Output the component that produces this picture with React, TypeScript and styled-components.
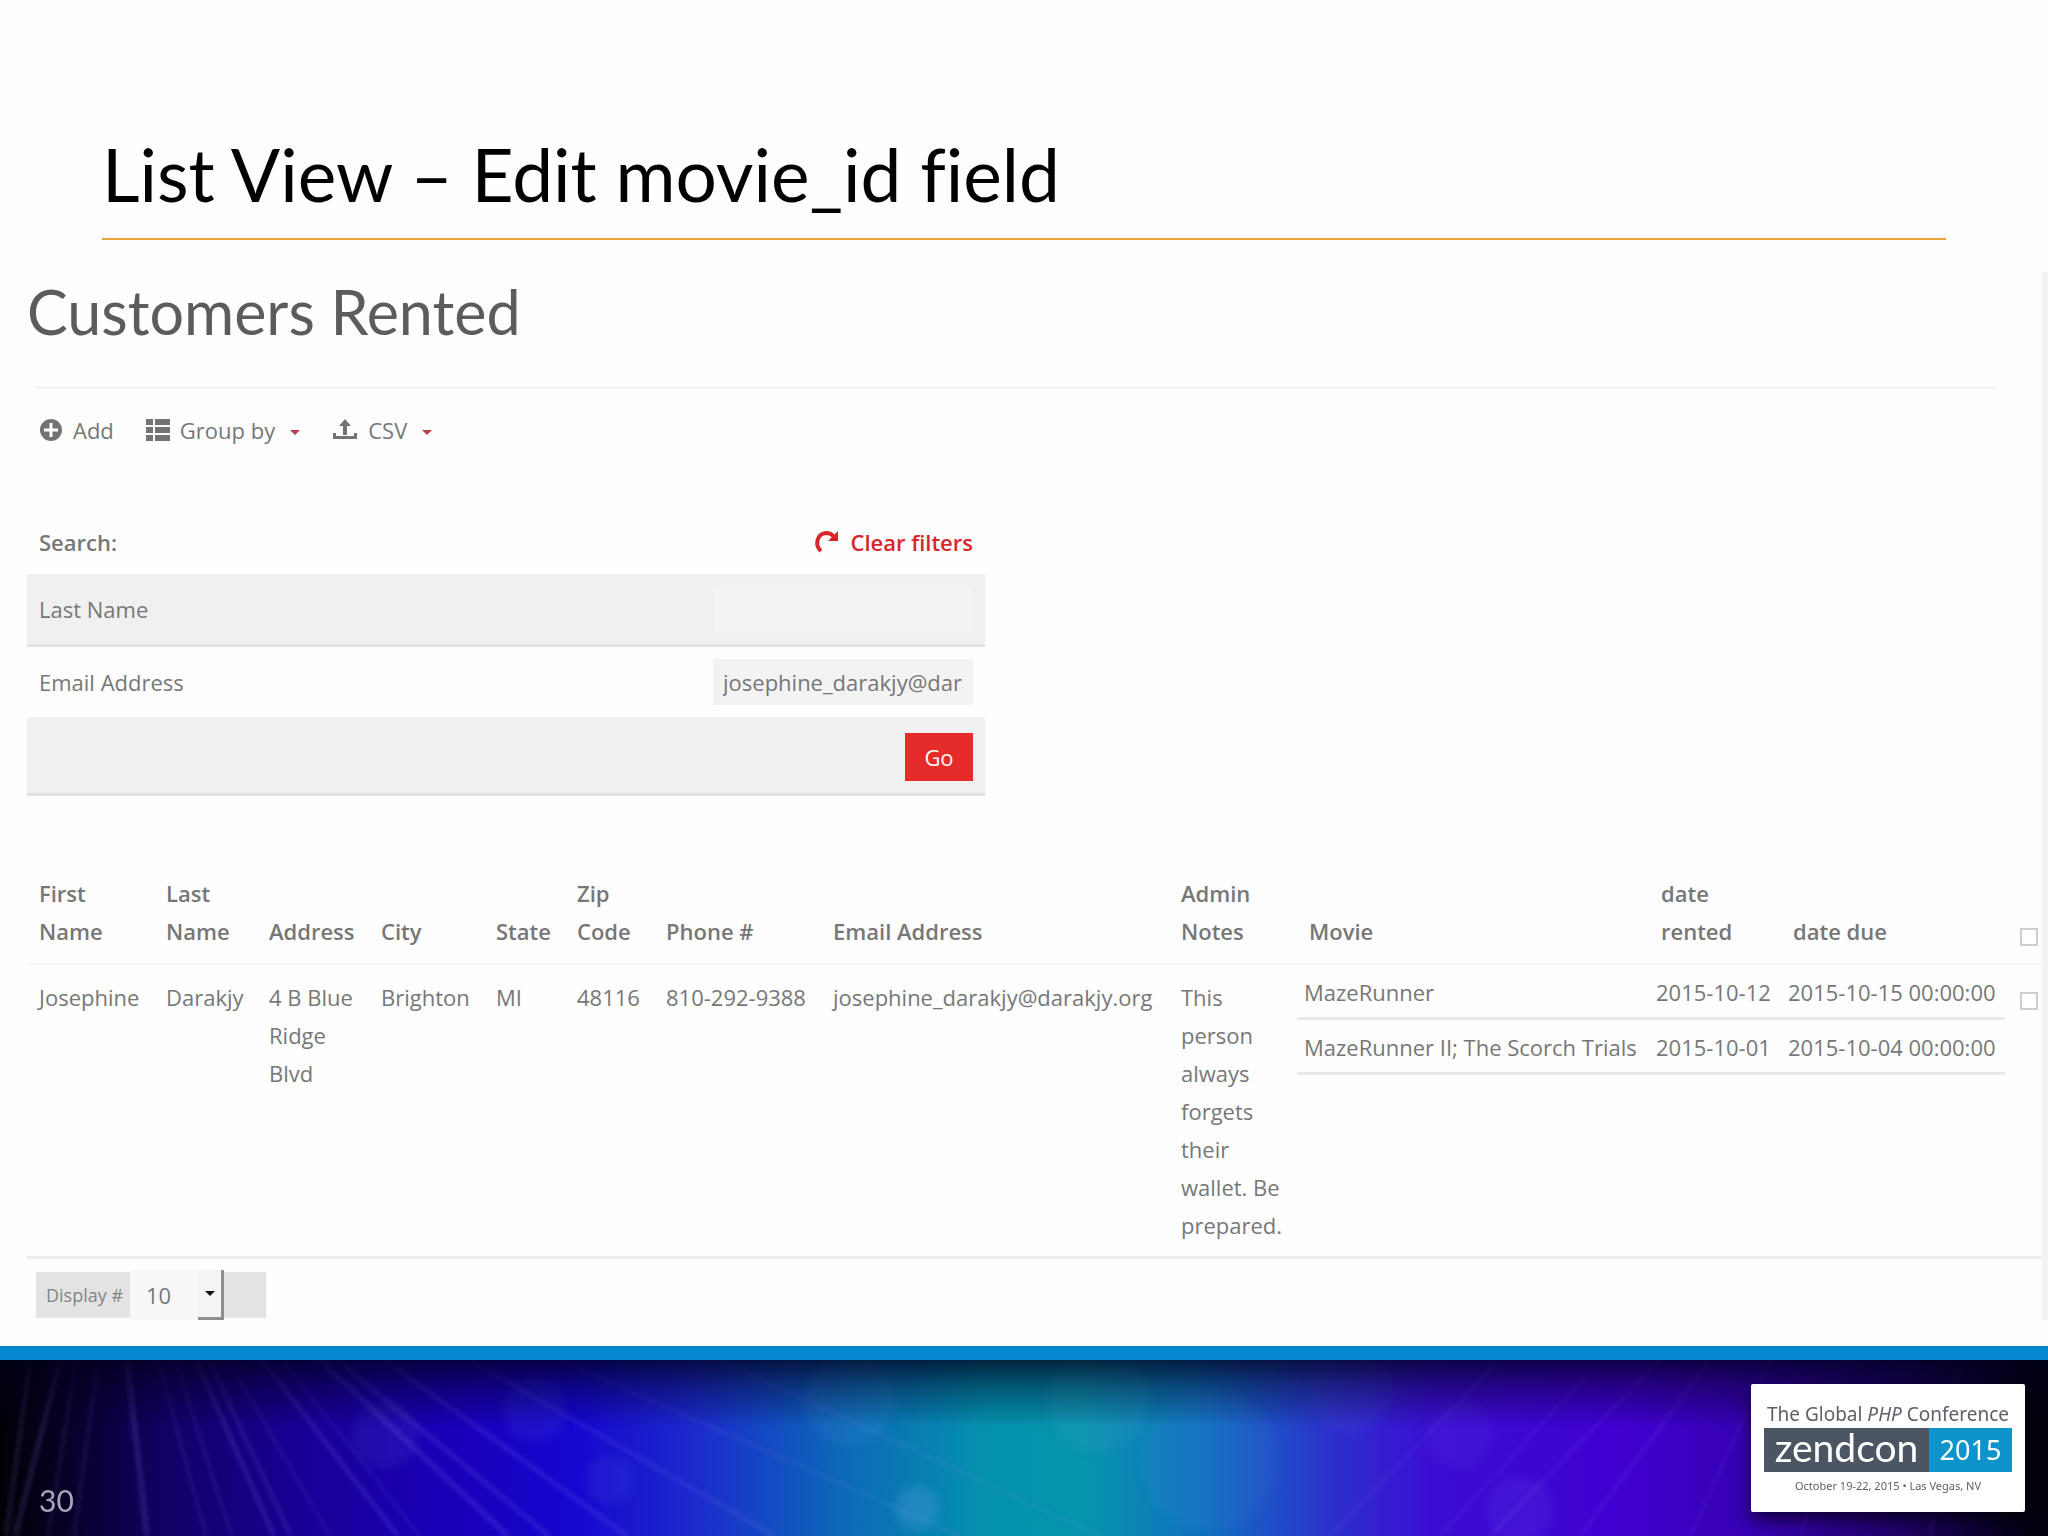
import React from "react";
import styled, { createGlobalStyle, css } from "styled-components";

const Global = createGlobalStyle`
  * { box-sizing: border-box; }
  body { margin: 0; background: #fefefe; }
  #root { display: flex; min-height: 100vh; }
`;

const Slide = styled.div`
  flex: 1;
  min-width: 0;
  display: flex;
  flex-direction: column;
  min-height: 100vh;
  color: #777;
  font: 22px/38px "Open Sans", sans-serif;
`;

const SlideHeader = styled.header`
  margin: 0 102px;
  padding-top: 126px;
  border-bottom: 2px solid #eba63a;
`;

const SlideTitle = styled.h1`
  margin: 0;
  padding-bottom: 16px;
  color: #000;
  font: 400 73px/96px Lato, sans-serif;
  font-variant-ligatures: none;
`;

const Screen = styled.main`
  flex: 1;
  margin: 32px 0 26px;
  padding: 0 0 0 27px;
  border-right: 6px solid #f4f2f4;
`;

const PageTitle = styled.h2`
  margin: 0;
  padding-top: 2px;
  color: #5c5c5c;
  font: 400 61px/76px Lato, sans-serif;
`;

const Rule = styled.hr`
  margin: 36px 46px 22px 8px;
  border: 0;
  height: 3px;
  background: #f6f4f5;
`;

const Toolbar = styled.nav`
  display: flex;
  align-items: center;
  gap: 32px;
  padding-left: 12px;
`;

const ToolButton = styled.button`
  display: flex;
  align-items: center;
  gap: 10px;
  padding: 0;
  border: 0;
  background: none;
  color: #777;
  font: inherit;
`;

const Caret = styled.span`
  margin: 4px 0 0 5px;
  border: 5px solid transparent;
  border-top-color: #b8404c;
  border-bottom: 0;
`;

const SearchForm = styled.form`
  width: 958px;
  margin-top: 74px;
`;

const SearchHead = styled.div`
  display: flex;
  justify-content: space-between;
  padding: 0 12px 13px;
  font-weight: 600;
`;

const ClearLink = styled.a`
  display: flex;
  align-items: center;
  gap: 10px;
  color: #d8242c;
  text-decoration: none;
`;

const SearchRow = styled.div<{ $shaded?: boolean }>`
  display: flex;
  align-items: center;
  justify-content: space-between;
  padding: 12px;
  ${(p) =>
    p.$shaded &&
    css`
      background: #f1f0f1;
      border-bottom: 3px solid #e3e2e3;
    `}
`;

const ActionRow = styled(SearchRow)`
  padding: 16px 12px 12px;
  justify-content: flex-end;
`;

const Field = styled.input`
  width: 260px;
  height: 46px;
  padding: 0 10px;
  border: 0;
  background: #f4f3f4;
  color: #777;
  font: inherit;
`;

const GoButton = styled.button`
  width: 68px;
  height: 48px;
  border: 0;
  background: #e62c2a;
  color: #fff;
  font: inherit;
`;

const CustomerTable = styled.table`
  width: 100%;
  margin-top: 65px;
  table-layout: fixed;
  border-collapse: collapse;
  border-bottom: 3px solid #efedef;
`;

const HeadCell = styled.th`
  padding: 13px 12px 13px;
  vertical-align: bottom;
  text-align: left;
  font-weight: 600;
`;

const Cell = styled.td`
  padding: 13px 8px 12px 12px;
  border-top: 2px solid #f7f5f7;
  vertical-align: top;
`;

const RentalsCell = styled(Cell)`
  padding: 0;
`;

const Rentals = styled.table`
  width: 708px;
  table-layout: fixed;
  border-collapse: collapse;
  white-space: nowrap;
`;

const RentalCell = styled.td`
  padding: 8px 7px 6px;
  border-bottom: 3px solid #e9e8ea;
`;

const CheckBox = styled.input`
  appearance: none;
  display: block;
  width: 18px;
  height: 18px;
  margin: 14px 0 4px;
  border: 2px solid #cfcdcf;
  background: #fff;
`;

const Pager = styled.div`
  display: inline-flex;
  align-items: center;
  width: 230px;
  height: 46px;
  margin: 13px 0 0 9px;
  background: #e4e3e4;
`;

const PagerLabel = styled.label`
  width: 94px;
  padding-left: 10px;
  font-size: 18px;
  color: #858585;
`;

const PagerSelect = styled.select`
  appearance: none;
  width: 68px;
  height: 50px;
  padding: 0 16px;
  border: 0;
  border-radius: 0;
  background: #f8f7f8;
  color: #777;
  font: inherit;
`;

const PagerArrow = styled.span`
  display: flex;
  align-items: center;
  justify-content: center;
  width: 26px;
  height: 50px;
  border-right: 3px solid #8e8e8e;
  border-bottom: 3px solid #8e8e8e;
  background: #f5f4f5;

  &::after {
    content: "";
    border: 5px solid transparent;
    border-top-color: #111;
    border-bottom: 0;
  }
`;

const Footer = styled.footer`
  display: grid;
  height: 190px;
  border-top: 14px solid #0586cf;
`;

const Backdrop = styled.svg`
  grid-area: 1 / 1;
  display: block;
  width: 100%;
  height: 176px;
`;

const FooterContent = styled.div`
  grid-area: 1 / 1;
  z-index: 1;
  display: flex;
  justify-content: space-between;
  padding: 24px 23px 0 39px;
`;

const PageNumber = styled.span`
  padding-top: 96px;
  color: #a9a6b8;
  font: 30px/40px Lato, sans-serif;
`;

const Badge = styled.section`
  width: 274px;
  height: 128px;
  padding: 16px 13px 0;
  border-radius: 2px;
  background: #fff;
  color: #5d6067;
  box-shadow: 0 8px 16px rgba(0, 0, 0, 0.6);
  white-space: nowrap;
  text-align: center;
`;

const Tagline = styled.p`
  margin: 0;
  font: 19px/28px "Noto Sans", sans-serif;
`;

const Brand = styled.div`
  display: grid;
  grid-template-columns: 165px 1fr;
  height: 44px;
  background: #4b5662;
  color: #fff;
`;

const BrandName = styled.span`
  font: 39px/38px Lato, sans-serif;
`;

const BrandYear = styled.span`
  background: #0d94ca;
  font: 27px/44px "Noto Sans", sans-serif;
`;

const Venue = styled.p`
  margin: 0;
  font: 11px/28px "Noto Sans", sans-serif;
`;

const AddIcon = () => (
  <svg width="24" height="24" viewBox="0 0 24 24" aria-hidden="true">
    <circle cx="12" cy="12" r="11" fill="#737373" />
    <path d="M12 5v14M5 12h14" stroke="#fff" strokeWidth="3" />
  </svg>
);

const ListIcon = () => (
  <svg width="24" height="24" viewBox="0 0 24 24" aria-hidden="true" fill="#737373">
    {[0, 8, 16].map((y) => (
      <g key={y}>
        <rect x="0" y={y + 1} width="7" height="6" />
        <rect x="9" y={y + 1} width="15" height="6" />
      </g>
    ))}
  </svg>
);

const UploadIcon = () => (
  <svg width="26" height="24" viewBox="0 0 26 24" aria-hidden="true" fill="#737373">
    <path d="M13 1l6 7h-4v9h-4V8H7z" />
    <path d="M1 15h3v3h18v-3h3v6H1z" />
  </svg>
);

const RedoIcon = () => (
  <svg width="26" height="26" viewBox="0 0 26 26" aria-hidden="true">
    <path d="M7 22C1 17 2 5 12 4c4 0 6 1 8 4" fill="none" stroke="#d8242c" strokeWidth="4" />
    <path d="M24 2v10H14z" fill="#d8242c" />
  </svg>
);

/* Each beam: x at the top edge, x at the bottom edge, thickness. */
const beams = [
  [30, 6, 3], [60, 15, 4], [76, 48, 2], [98, 74, 2], [127, 147, 5], [158, 206, 2],
  [175, 232, 2], [196, 274, 4], [209, 291, 3], [228, 330, 2], [262, 398, 4],
  [282, 420, 2], [320, 508, 5], [338, 549, 4], [385, 627, 4], [470, 775, 3],
  [560, 960, 4], [720, 1100, 4], [1500, 1330, 3], [1600, 1440, 3],
  [1660, 1490, 4], [1710, 1580, 4], [1770, 1690, 3], [1850, 1800, 3], [1960, 1930, 3],
];

/* Each orb: centre x, centre y, radius, opacity. */
const orbs = [
  [917, 148, 22, 0.18], [1098, 40, 52, 0.07], [1210, 100, 70, 0.05],
  [1460, 75, 34, 0.05], [1520, 150, 34, 0.07], [535, 50, 32, 0.07],
  [385, 75, 34, 0.07], [610, 120, 24, 0.07], [1350, 30, 42, 0.05], [850, 40, 46, 0.07],
];

const StageLights = () => (
  <Backdrop viewBox="0 0 2048 176" preserveAspectRatio="none" aria-hidden="true">
    <defs>
      <linearGradient id="stage">
        <stop offset="0" stopColor="#020006" />
        <stop offset="0.03" stopColor="#070024" />
        <stop offset="0.08" stopColor="#120064" />
        <stop offset="0.14" stopColor="#170090" />
        <stop offset="0.21" stopColor="#1a00b4" />
        <stop offset="0.28" stopColor="#1706d0" />
        <stop offset="0.34" stopColor="#1b2bcc" />
        <stop offset="0.41" stopColor="#0c68b8" />
        <stop offset="0.48" stopColor="#0491ae" />
        <stop offset="0.53" stopColor="#0694ae" />
        <stop offset="0.59" stopColor="#116fc0" />
        <stop offset="0.65" stopColor="#2c30cc" />
        <stop offset="0.7" stopColor="#3b0dd3" />
        <stop offset="0.79" stopColor="#4000d2" />
        <stop offset="0.86" stopColor="#3500ae" />
        <stop offset="0.93" stopColor="#1d0064" />
        <stop offset="0.98" stopColor="#07001e" />
        <stop offset="1" stopColor="#020008" />
      </linearGradient>
      <linearGradient id="topShade" x2="0" y2="1">
        <stop offset="0" stopColor="#00001a" stopOpacity="0.75" />
        <stop offset="0.15" stopColor="#00001a" stopOpacity="0.4" />
        <stop offset="0.38" stopColor="#00001a" stopOpacity="0" />
      </linearGradient>
      <filter id="soft"><feGaussianBlur stdDeviation="2" /></filter>
      <filter id="haze"><feGaussianBlur stdDeviation="5" /></filter>
    </defs>
    <rect width="2048" height="176" fill="url(#stage)" />
    <g filter="url(#haze)">
      {orbs.map(([x, y, r, o]) => (
        <circle key={x} cx={x} cy={y} r={r} fill="#8fb4ff" opacity={o} />
      ))}
    </g>
    <g filter="url(#soft)">
      {beams.map(([top, bottom, width]) => (
        <line
          key={top}
          x1={top}
          y1="0"
          x2={bottom}
          y2="176"
          stroke="#8f8cff"
          strokeWidth={width}
          opacity={top < 500 ? 0.2 : 0.1}
        />
      ))}
    </g>
    <rect width="2048" height="176" fill="url(#topShade)" />
  </Backdrop>
);

const columns: [string, number][] = [
  ["First Name", 127],
  ["Last Name", 103],
  ["Address", 112],
  ["City", 115],
  ["State", 81],
  ["Zip Code", 89],
  ["Phone #", 167],
  ["Email Address", 348],
  ["Admin Notes", 128],
  ["Movie", 352],
  ["date rented", 132],
  ["date due", 227],
];

const customer = [
  "Josephine", "Darakjy", "4 B Blue Ridge Blvd", "Brighton", "MI", "48116",
  "810-292-9388", "josephine_darakjy@darakjy.org",
  "This person always forgets their wallet. Be prepared.",
];

const rentals = [
  ["MazeRunner", "2015-10-12", "2015-10-15 00:00:00"],
  ["MazeRunner II; The Scorch Trials", "2015-10-01", "2015-10-04 00:00:00"],
];

export default function App() {
  return (
    <>
      <Global />
      <Slide>
        <SlideHeader>
          <SlideTitle>List View – Edit movie_id field</SlideTitle>
        </SlideHeader>
        <Screen>
          <PageTitle>Customers Rented</PageTitle>
          <Rule />
          <Toolbar>
            <ToolButton type="button"><AddIcon />Add</ToolButton>
            <ToolButton type="button"><ListIcon />Group by<Caret /></ToolButton>
            <ToolButton type="button"><UploadIcon />CSV<Caret /></ToolButton>
          </Toolbar>
          <SearchForm onSubmit={(e) => e.preventDefault()}>
            <SearchHead>
              <span>Search:</span>
              <ClearLink href="#clear"><RedoIcon />Clear filters</ClearLink>
            </SearchHead>
            <SearchRow $shaded>
              <label htmlFor="last-name">Last Name</label>
              <Field id="last-name" />
            </SearchRow>
            <SearchRow>
              <label htmlFor="email">Email Address</label>
              <Field id="email" defaultValue="josephine_darakjy@darakjy.org" />
            </SearchRow>
            <ActionRow $shaded>
              <GoButton type="submit">Go</GoButton>
            </ActionRow>
          </SearchForm>
          <CustomerTable>
            <colgroup>
              {columns.map(([name, width]) => <col key={name} width={width} />)}
              <col />
            </colgroup>
            <thead>
              <tr>
                {columns.map(([name]) => <HeadCell key={name}>{name}</HeadCell>)}
                <HeadCell><CheckBox type="checkbox" aria-label="Select all" /></HeadCell>
              </tr>
            </thead>
            <tbody>
              <tr>
                {customer.map((value) => <Cell key={value}>{value}</Cell>)}
                <RentalsCell colSpan={3}>
                  <Rentals>
                    <colgroup>
                      <col width="352" />
                      <col width="132" />
                      <col />
                    </colgroup>
                    <tbody>
                      {rentals.map((row) => (
                        <tr key={row[0]}>
                          {row.map((value) => <RentalCell key={value}>{value}</RentalCell>)}
                        </tr>
                      ))}
                    </tbody>
                  </Rentals>
                </RentalsCell>
                <Cell><CheckBox type="checkbox" aria-label="Select Josephine Darakjy" /></Cell>
              </tr>
            </tbody>
          </CustomerTable>
          <Pager>
            <PagerLabel htmlFor="display">Display #</PagerLabel>
            <PagerSelect id="display" defaultValue="10">
              <option>10</option>
              <option>20</option>
              <option>50</option>
            </PagerSelect>
            <PagerArrow />
          </Pager>
        </Screen>
        <Footer>
          <StageLights />
          <FooterContent>
            <PageNumber>30</PageNumber>
            <Badge>
              <Tagline>The Global <em>PHP</em> Conference</Tagline>
              <Brand>
                <BrandName>zendcon</BrandName>
                <BrandYear>2015</BrandYear>
              </Brand>
              <Venue>October 19-22, 2015 • Las Vegas, NV</Venue>
            </Badge>
          </FooterContent>
        </Footer>
      </Slide>
    </>
  );
}
